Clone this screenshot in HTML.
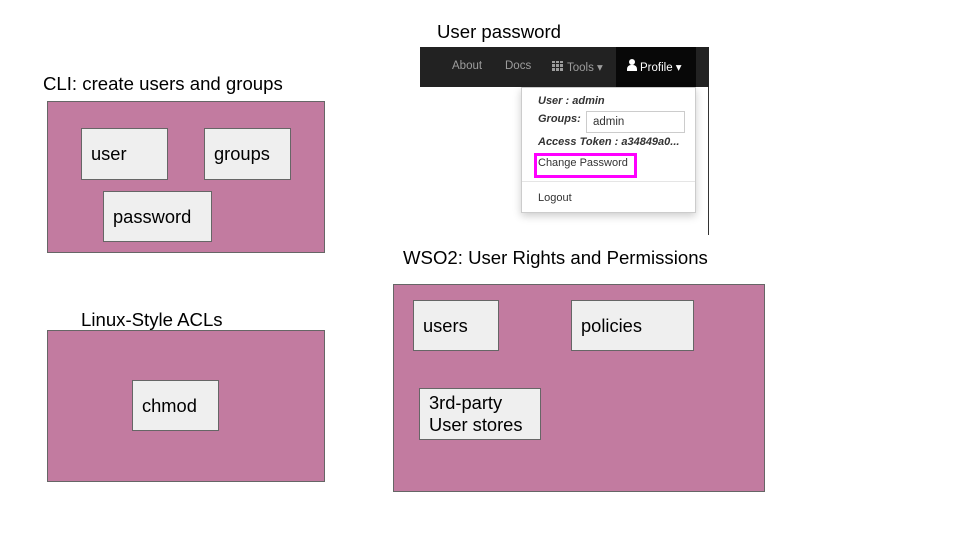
<!DOCTYPE html>
<html><head><meta charset="utf-8"><style>
*{margin:0;padding:0;box-sizing:border-box}
body{width:960px;height:540px;background:#fff;position:relative;overflow:hidden;font-family:"Liberation Sans",Arial,sans-serif;color:#000}
.a{position:absolute}
.t{font-size:18.6px;white-space:nowrap}
.pink{background:#c27ba0;border:1px solid #666}
.box{background:#efefef;border:1px solid #666;font-size:18.3px;padding-left:9px;display:flex;align-items:center}
.nav{left:420px;top:47px;width:289px;height:40px;background:#222}
.nl{font-size:11.5px;color:#9d9d9d;top:13px}
.dd{left:521px;top:87px;width:175px;height:126px;background:#fff;border:1px solid #ccc;box-shadow:0 3px 8px rgba(0,0,0,.2);font-size:11px;color:#333}
</style></head><body>
<div class="a t" style="left:43px;top:73px">CLI: create users and groups</div>
<div class="a pink" style="left:47px;top:101px;width:278px;height:152px"></div>
<div class="a box" style="left:81px;top:128px;width:87px;height:52px">user</div>
<div class="a box" style="left:204px;top:128px;width:87px;height:52px">groups</div>
<div class="a box" style="left:103px;top:191px;width:109px;height:51px">password</div>

<div class="a t" style="left:81px;top:309px">Linux-Style ACLs</div>
<div class="a pink" style="left:47px;top:330px;width:278px;height:152px"></div>
<div class="a box" style="left:132px;top:380px;width:87px;height:51px">chmod</div>

<div class="a t" style="left:437px;top:21px">User password</div>
<div class="a t" style="left:403px;top:247px">WSO2: User Rights and Permissions</div>
<div class="a pink" style="left:393px;top:284px;width:372px;height:208px"></div>
<div class="a box" style="left:413px;top:300px;width:86px;height:51px">users</div>
<div class="a box" style="left:571px;top:300px;width:123px;height:51px">policies</div>
<div class="a box" style="left:419px;top:388px;width:122px;height:52px;line-height:22px">3rd-party<br>User stores</div>

<div class="a nav"></div>
<div class="a" style="left:616px;top:47px;width:80px;height:40px;background:#080808"></div>
<div class="a nl" style="left:452px;top:60px">About</div>
<div class="a nl" style="left:505px;top:60px">Docs</div>
<div class="a" style="left:552px;top:61px;width:12px;height:10px;background:repeating-linear-gradient(90deg,#9d9d9d 0 3px,transparent 3px 4px),#222"></div>
<div class="a" style="left:552px;top:61px;width:12px;height:10px;background:repeating-linear-gradient(0deg,transparent 0 3px,#222 3px 4px)"></div>
<div class="a nl" style="left:567px;top:60px">Tools ▾</div>
<div class="a" style="left:629px;top:59px;width:6px;height:6px;border-radius:50%;background:#fff"></div>
<div class="a" style="left:627px;top:65px;width:10px;height:6px;border-radius:4px 4px 0 0;background:#fff"></div>
<div class="a nl" style="left:640px;top:60px;color:#fff">Profile ▾</div>
<div class="a" style="left:708px;top:87px;width:1px;height:148px;background:#333"></div>

<div class="a dd"></div>
<div class="a" style="left:538px;top:95px;font-size:11px;font-weight:bold;font-style:italic;color:#333">User : admin</div>
<div class="a" style="left:538px;top:113px;font-size:11px;font-weight:bold;font-style:italic;color:#333">Groups:</div>
<div class="a" style="left:586px;top:111px;width:99px;height:22px;border:1px solid #ccc;font-size:11.5px;color:#333;padding:4px 0 0 6px">admin</div>
<div class="a" style="left:538px;top:136px;font-size:11px;font-weight:bold;font-style:italic;color:#333">Access Token : a34849a0...</div>
<div class="a" style="left:534px;top:153px;width:103px;height:25px;border:3px solid #f0f"></div>
<div class="a" style="left:538px;top:157px;font-size:11px;color:#333">Change Password</div>
<div class="a" style="left:522px;top:181px;width:173px;height:1px;background:#e5e5e5"></div>
<div class="a" style="left:538px;top:192px;font-size:11px;color:#333">Logout</div>
</body></html>
